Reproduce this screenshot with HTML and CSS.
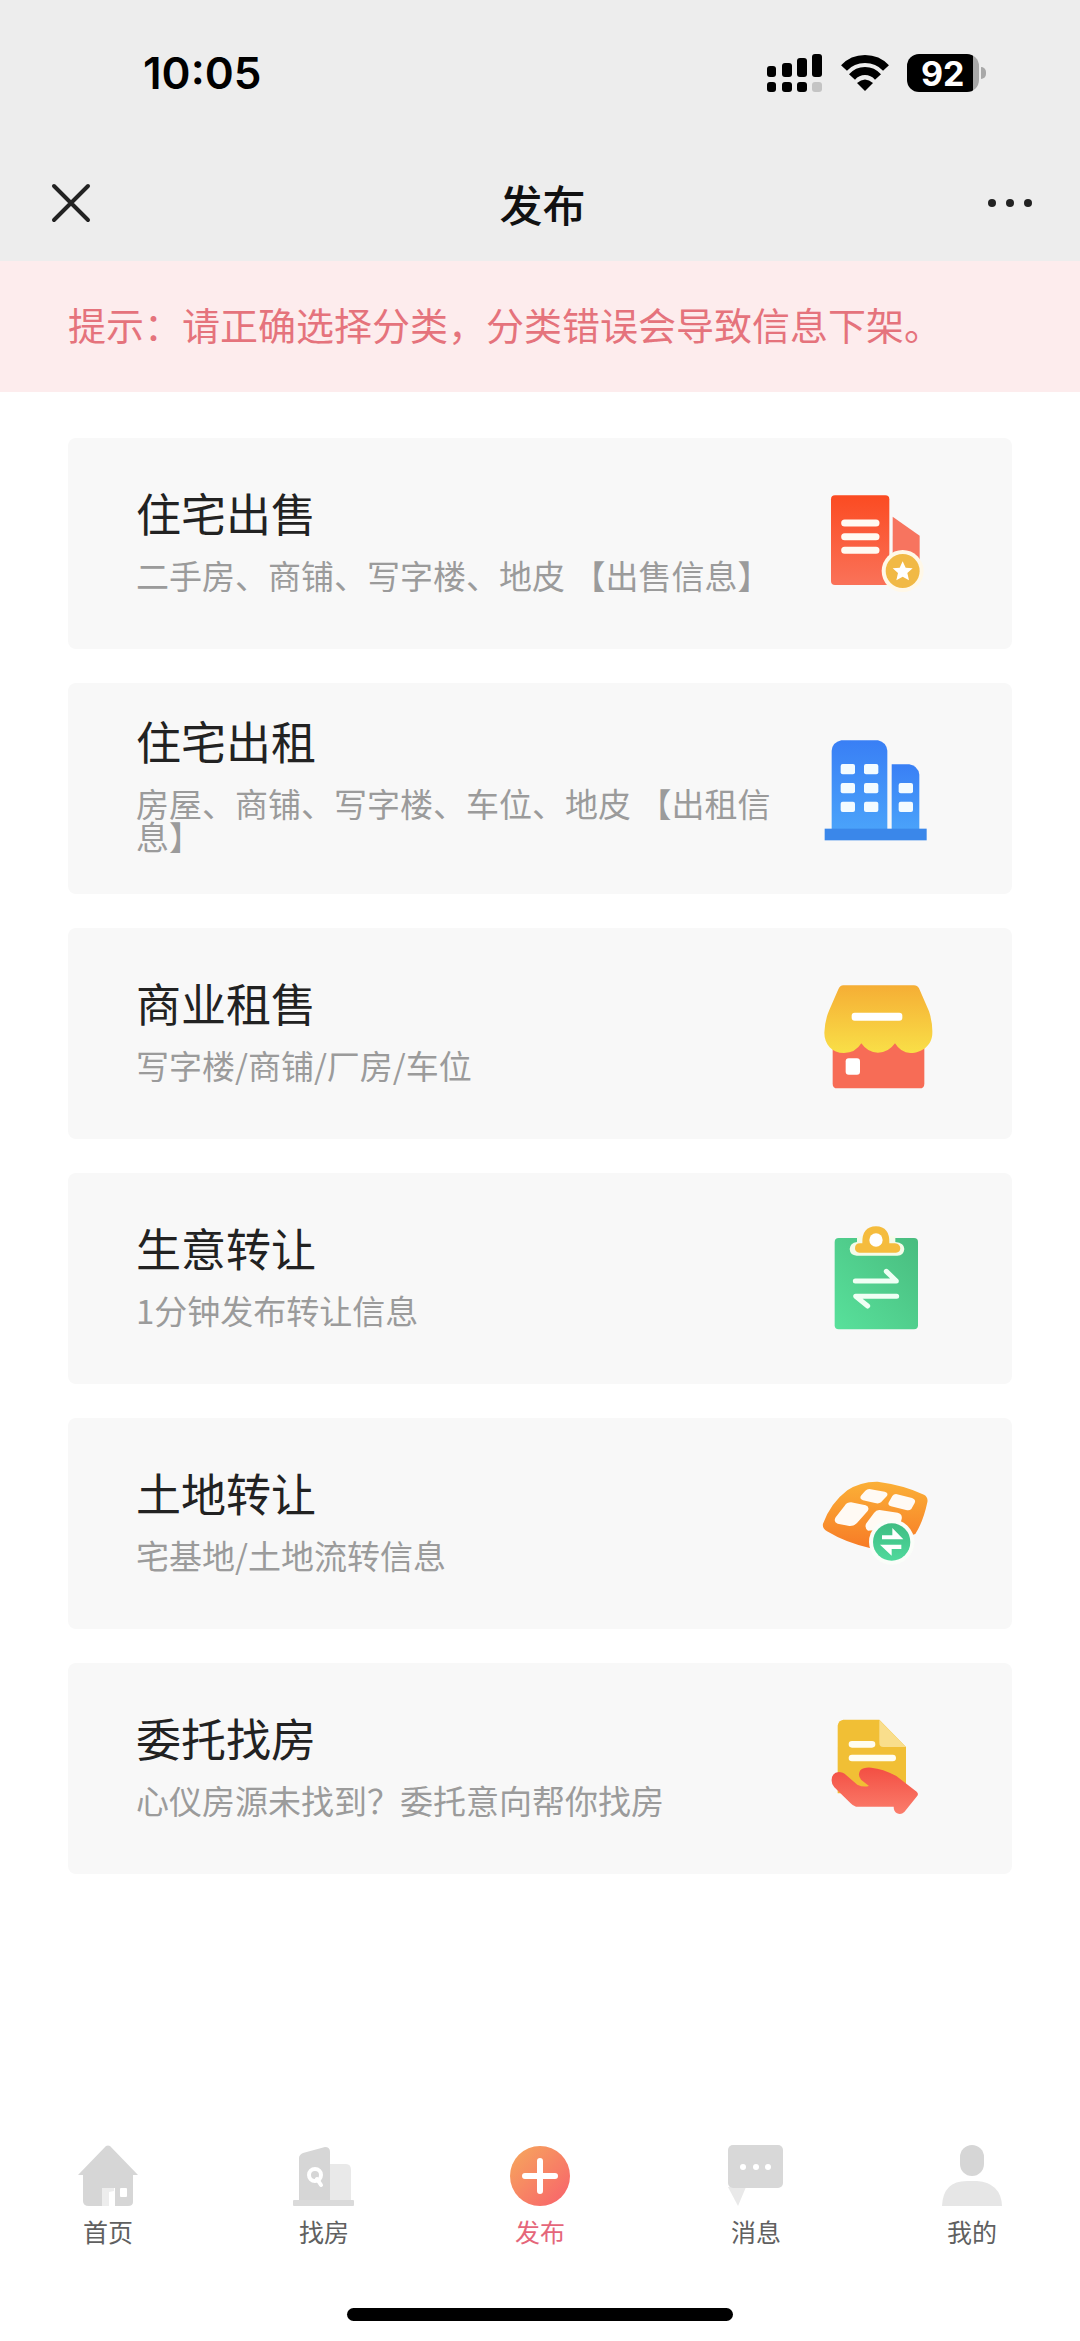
FILE: index.html
```html
<!DOCTYPE html>
<html lang="zh-CN">
<head>
    <meta charset="UTF-8">
    <meta name="viewport" content="width=device-width, initial-scale=1.0">
    <title>发布</title>
    <link rel="stylesheet" href="styles.css">
</head>
<body>
    <header class="top">
        <div class="status-bar">
            <span class="time">10:05</span>
            <div class="status-icons">
                <svg class="signal" viewBox="0 0 55 39" aria-hidden="true">
                    <rect x="0" y="12" width="9" height="11" rx="3"/>
                    <rect x="15" y="9" width="10" height="14" rx="3"/>
                    <rect x="30" y="4" width="10" height="19" rx="3"/>
                    <rect x="45" y="0" width="10" height="23" rx="3"/>
                    <rect x="0" y="28" width="9" height="10" rx="3"/>
                    <rect x="15" y="28" width="10" height="10" rx="3"/>
                    <rect x="30" y="28" width="10" height="10" rx="3"/>
                    <rect x="45" y="28" width="10" height="10" rx="3" fill="#c4c4c4"/>
                </svg>
                <svg class="wifi" viewBox="0 0 50 38" aria-hidden="true">
                    <g fill="none" stroke="#000" stroke-width="8">
                        <path d="M4 14C15 2 35 2 46 14"/>
                        <path d="M12 23C19 15 31 15 38 23"/>
                    </g>
                    <path d="M17 29Q25 22 33 29L25 37Z"/>
                </svg>
                <div class="battery"><span class="level">92</span></div>
            </div>
        </div>
        <div class="nav">
            <button class="nav-button" aria-label="关闭">
                <svg viewBox="0 0 38 38"><path d="M2 2L36 36M36 2L2 36" fill="none" stroke="#222" stroke-width="4" stroke-linecap="round"/></svg>
            </button>
            <h1>发布</h1>
            <button class="nav-button more" aria-label="更多">
                <svg viewBox="0 0 46 38"><circle cx="5" cy="19" r="4"/><circle cx="23" cy="19" r="4"/><circle cx="41" cy="19" r="4"/></svg>
            </button>
        </div>
    </header>

    <p class="notice">提示：请正确选择分类，分类错误会导致信息下架。</p>

    <main class="card-list">
        <a class="card" href="#">
            <div class="card-text">
                <h2>住宅出售</h2>
                <p>二手房、商铺、写字楼、地皮 【出售信息】</p>
            </div>
            <svg class="card-icon" viewBox="66 57 330 330" aria-hidden="true">
                <defs>
                    <linearGradient id="sale" x1="0" y1="0" x2="0" y2="1"><stop offset="0" stop-color="#fb4b22"/><stop offset="1" stop-color="#fa7259"/></linearGradient>
                </defs>
                <rect x="93" y="76" width="175" height="269" rx="12" fill="url(#sale)"/>
                <path d="M278 140L359 197V275H278Z" fill="#f7745f"/>
                <path d="M134 159H228M134 200H228M134 241H228" stroke="#fffaf2" stroke-width="21" stroke-linecap="round"/>
                <circle cx="308" cy="303" r="63" fill="#fff8e8"/>
                <circle cx="308" cy="303" r="51" fill="#f1b945"/>
                <path d="M308 274L317 293L338 295L322 309L327 331L308 320L289 331L294 309L278 295L299 293Z" fill="#fff"/>
            </svg>
        </a>
        <a class="card" href="#">
            <div class="card-text">
                <h2>住宅出租</h2>
                <p>房屋、商铺、写字楼、车位、地皮 【出租信息】</p>
            </div>
            <svg class="card-icon" viewBox="66 43 330 330" aria-hidden="true">
                <defs>
                    <linearGradient id="rent" x1="0" y1="0" x2="0" y2="1"><stop offset="0" stop-color="#397ff5"/><stop offset="1" stop-color="#4aa2fa"/></linearGradient>
                </defs>
                <path d="M95 328V93Q97 68 124 62H234Q259 68 262 93V328Z" fill="url(#rent)"/>
                <path d="M275 328V134H328Q354 138 358 165V328Z" fill="url(#rent)"/>
                <rect x="74" y="327" width="306" height="35" fill="#3a87ea"/>
                <g fill="#f3fbff">
                    <rect x="122" y="133" width="43" height="31" rx="6"/>
                    <rect x="192" y="133" width="43" height="31" rx="6"/>
                    <rect x="122" y="190" width="43" height="31" rx="6"/>
                    <rect x="192" y="190" width="43" height="31" rx="6"/>
                    <rect x="122" y="246" width="43" height="31" rx="6"/>
                    <rect x="192" y="246" width="43" height="31" rx="6"/>
                    <rect x="296" y="190" width="43" height="31" rx="6"/>
                    <rect x="296" y="246" width="43" height="31" rx="6"/>
                </g>
            </svg>
        </a>
        <a class="card" href="#">
            <div class="card-text">
                <h2>商业租售</h2>
                <p>写字楼/商铺/厂房/车位</p>
            </div>
            <svg class="card-icon" viewBox="66 43 330 330" aria-hidden="true">
                <defs>
                    <linearGradient id="roof" x1="0" y1="0" x2="0" y2="1"><stop offset="0" stop-color="#f5ae35"/><stop offset="1" stop-color="#f9df47"/></linearGradient>
                </defs>
                <path d="M98 220H373V357Q373 371 359 371H112Q98 371 98 357Z" fill="#f76c56"/>
                <path d="M130 62H342Q352 62 357 71L387 140Q398 174 397 205C397 241 367 265 331 265Q302 264 285 236Q265 264 234 264Q203 264 184 236Q166 265 132 265C96 265 73 239 73 204Q75 165 87 138L115 74Q120 62 130 62Z" fill="url(#roof)"/>
                <rect x="155" y="144" width="152" height="24" rx="9" fill="#fff"/>
                <rect x="137" y="281" width="43" height="49" rx="9" fill="#fff"/>
            </svg>
        </a>
        <a class="card" href="#">
            <div class="card-text">
                <h2>生意转让</h2>
                <p>1分钟发布转让信息</p>
            </div>
            <svg class="card-icon" viewBox="66 45 330 330" aria-hidden="true">
                <defs>
                    <linearGradient id="board" x1="1" y1="0" x2="0" y2="1"><stop offset="0" stop-color="#49bc7f"/><stop offset="1" stop-color="#58e19b"/></linearGradient>
                </defs>
                <rect x="104" y="87" width="250" height="274" rx="12" fill="url(#board)"/>
                <path d="M171 82H286V99Q313 102 313 120Q311 140 292 140H170Q150 139 149 120Q150 102 171 99Z" fill="#f5fbe9"/>
                <path d="M165 118Q165 103 180 103H187Q185 53 228 52Q270 53 268 103H285Q300 105 301 118Q300 131 288 131H178Q165 130 165 118Z" fill="#f5bc3d"/>
                <circle cx="228" cy="93" r="20" fill="#fff"/>
                <path d="M166 216H289L259 187M290 262H167L203 291" fill="none" stroke="#effff4" stroke-width="15" stroke-linecap="round" stroke-linejoin="round"/>
            </svg>
        </a>
        <a class="card" href="#">
            <div class="card-text">
                <h2>土地转让</h2>
                <p>宅基地/土地流转信息</p>
            </div>
            <svg class="card-icon" viewBox="66 30 330 330" aria-hidden="true">
                <defs>
                    <linearGradient id="land" x1="0" y1="0" x2="0" y2="1"><stop offset="0" stop-color="#fbb037"/><stop offset="1" stop-color="#f77b26"/></linearGradient>
                    <linearGradient id="swap" x1="0" y1="0" x2="0" y2="1"><stop offset="0" stop-color="#3ebd83"/><stop offset="1" stop-color="#4fd99c"/></linearGradient>
                </defs>
                <path d="M69 194Q93 131 142 94Q182 67 233 68Q314 79 372 107Q385 114 382 130Q370 187 346 225L212 268Q137 251 81 217Q66 208 69 194Z" fill="url(#land)"/>
                <g fill="#fffaf4">
                    <path d="M208 90L254 98Q267 102 260 112L243 130Q236 135 225 132L189 124Q176 119 184 109L196 95Q201 90 208 90Z"/>
                    <path d="M288 105L336 117Q349 122 344 132L334 150Q328 156 318 153L273 142Q260 138 268 127L277 111Q281 105 288 105Z"/>
                    <path d="M153 130L197 139Q210 144 203 156L171 192Q162 202 148 201L113 194Q99 189 107 175L134 140Q141 130 153 130Z"/>
                    <path d="M239 153L293 161Q308 165 305 180L297 207L204 215Q192 206 199 193L222 162Q229 152 239 153Z"/>
                </g>
                <circle cx="275" cy="249" r="68" fill="#fafdf9"/>
                <circle cx="275" cy="249" r="56" fill="url(#swap)"/>
                <path d="M246 229H277V207L310 241H246ZM304 257H240L275 290V270H304Z" fill="#fff"/>
            </svg>
        </a>
        <a class="card" href="#">
            <div class="card-text">
                <h2>委托找房</h2>
                <p>心仪房源未找到？委托意向帮你找房</p>
            </div>
            <svg class="card-icon" viewBox="66 47 330 330" aria-hidden="true">
                <defs>
                    <linearGradient id="hand" x1="0" y1="0" x2="0" y2="1"><stop offset="0" stop-color="#f34f43"/><stop offset="1" stop-color="#fb7d6c"/></linearGradient>
                </defs>
                <path d="M113 82Q115 66 130 64H238L318 146V285H113Z" fill="#f1bf35"/>
                <path d="M238 65L318 146H250Q238 146 238 134Z" fill="#f9de8c"/>
                <path d="M156 138H216M156 179H278" stroke="#fffdf1" stroke-width="20" stroke-linecap="round"/>
                <path d="M95 247Q94 224 116 221Q129 221 139 231L172 259Q190 268 207 263L184 245Q171 231 181 216Q191 206 214 208Q248 211 289 233L350 280Q357 286 351 294L313 341Q303 351 291 345Q281 339 281 325H168Q158 322 151 314L103 267Q95 259 95 247Z" fill="url(#hand)"/>
            </svg>
        </a>
    </main>

    <nav class="tab-bar">
        <a class="tab" href="#">
            <svg viewBox="0 0 62 62" aria-hidden="true">
                <path d="M29 1Q31 0 33 1L61 30H56V57Q56 61 51 61H38V43H25V61H12Q6 61 6 56V30H1Z" fill="#d6d6d6"/>
                <path d="M25 43H37V46L32 47V61H25Z" fill="#ededed"/>
                <rect x="43" y="43" width="7" height="9" rx="1" fill="#fff"/>
            </svg>
            <span>首页</span>
        </a>
        <a class="tab" href="#">
            <svg viewBox="0 0 62 62" aria-hidden="true">
                <path d="M37 19H53Q58 19 58 25V56H37Z" fill="#e9e9e9"/>
                <path d="M6 56V13Q6 10 10 8L32 2Q37 2 37 7V56Z" fill="#d6d6d6"/>
                <rect x="0" y="55" width="61" height="6" rx="1" fill="#dadada"/>
                <circle cx="22" cy="30" r="6" fill="none" stroke="#fff" stroke-width="4"/>
                <path d="M24 34L28 40" stroke="#fff" stroke-width="4" stroke-linecap="round"/>
            </svg>
            <span>找房</span>
        </a>
        <a class="tab active" href="#">
            <svg viewBox="0 0 62 62" aria-hidden="true">
                <defs>
                    <linearGradient id="plus" x1="0" y1="0" x2="1" y2="1"><stop offset="0" stop-color="#f6a95c"/><stop offset="1" stop-color="#f8606c"/></linearGradient>
                </defs>
                <circle cx="31" cy="31" r="30" fill="url(#plus)"/>
                <path d="M31 16V46M16 31H46" stroke="#fff" stroke-width="6" stroke-linecap="round"/>
            </svg>
            <span>发布</span>
        </a>
        <a class="tab" href="#">
            <svg viewBox="0 0 62 62" aria-hidden="true">
                <path d="M3 42H21L13 61Z" fill="#e9e9e9"/>
                <rect x="3" y="0" width="55" height="43" rx="5" fill="#d8d8d8"/>
                <g fill="#fff"><circle cx="18" cy="22" r="3"/><circle cx="31" cy="22" r="3"/><circle cx="43" cy="22" r="3"/></g>
            </svg>
            <span>消息</span>
        </a>
        <a class="tab" href="#">
            <svg viewBox="0 0 62 62" aria-hidden="true">
                <rect x="19" y="0" width="24" height="31" rx="12" fill="#d6d6d6"/>
                <path d="M1 61Q2 36 26 36H36Q60 38 61 61Z" fill="#e6e6e6"/>
            </svg>
            <span>我的</span>
        </a>
    </nav>
    <div class="home-indicator"></div>
</body>
</html>
```
FILE: styles.css
```css
* {
    box-sizing: border-box;
}
body {
    display: flex;
    flex-direction: column;
    min-height: 100vh;
    margin: 0;
    background-color: #fff;
    color: #222;
    font-family: "Noto Sans CJK SC", sans-serif;
}
h1, h2, p {
    margin: 0;
    font-weight: 400;
}
a {
    color: inherit;
    text-decoration: none;
}
svg {
    display: block;
    overflow: visible;
}

/* status bar + title */
.top {
    background-color: #ededed;
}
.status-bar {
    display: flex;
    align-items: center;
    justify-content: space-between;
    height: 146px;
    padding: 0 94px 0 143px;
    color: #000;
    font-family: Inter, sans-serif;
}
.time {
    font-size: 44px;
    font-weight: 600;
}
.status-icons {
    display: flex;
    align-items: center;
}
.signal {
    width: 55px;
    height: 39px;
}
.wifi {
    width: 50px;
    height: 38px;
    margin: 0 17px 0 18px;
}
.battery {
    position: relative;
    display: flex;
    align-items: center;
    width: 72px;
    height: 38px;
    margin-right: 7px;
    padding-left: 14px;
    border-radius: 12px;
    background: linear-gradient(to right, #000 92%, #a8a8a8 92%);
}
.battery::after {
    content: "";
    position: absolute;
    left: 74px;
    top: 13px;
    width: 5px;
    height: 12px;
    border-radius: 0 6px 6px 0;
    background-color: #a8a8a8;
}
.level {
    color: #fff;
    font-size: 34px;
    font-weight: 700;
}
.nav {
    display: flex;
    align-items: center;
    justify-content: space-between;
    height: 115px;
    padding: 0 47px 2px 52px;
}
.nav h1 {
    color: #111;
    font-size: 43px;
    font-weight: 500;
    line-height: 60px;
}
.nav-button {
    width: 46px;
    padding: 0;
    border: none;
    background: none;
    cursor: pointer;
}
.nav-button svg {
    width: 38px;
    height: 38px;
    fill: #222;
}
.nav-button.more svg {
    width: 46px;
}

.notice {
    padding: 33px 68px 38px;
    background-color: #fdeced;
    color: #e5737c;
    font-size: 38px;
    line-height: 60px;
}

/* category cards */
.card-list {
    display: flex;
    flex: 1;
    flex-direction: column;
    gap: 34px;
    padding: 46px 68px;
}
.card {
    display: flex;
    align-items: center;
    justify-content: space-between;
    min-height: 211px;
    padding: 20px 80px 20px 68px;
    border-radius: 8px;
    background-color: #f8f8f8;
}
.card-text {
    flex: 1;
    max-width: 650px;
    padding-bottom: 6px;
}
.card h2 {
    font-size: 45px;
    line-height: 45px;
}
.card p {
    margin-top: 24px;
    color: #9b9b9b;
    font-size: 33px;
    line-height: 33px;
}
.card-icon {
    flex: none;
    width: 110px;
    height: 110px;
}

/* bottom tabs */
.tab-bar {
    display: flex;
}
.tab {
    display: flex;
    flex: 1;
    flex-direction: column;
    align-items: center;
    gap: 9px;
    color: #606060;
    font-size: 25px;
    line-height: 30px;
}
.tab svg {
    width: 62px;
    height: 62px;
}
.tab.active {
    color: #e5667a;
}
.home-indicator {
    width: 386px;
    height: 13px;
    margin: 62px auto 20px;
    border-radius: 7px;
    background-color: #000;
}
```
